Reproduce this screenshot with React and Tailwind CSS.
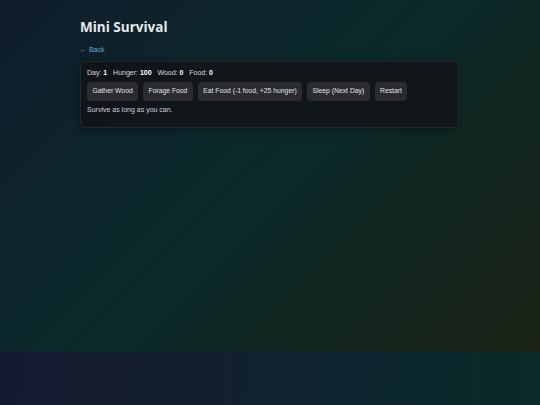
export default function App() {
  const buttons = ["Gather Wood", "Forage Food", "Eat Food (-1 food, +25 hunger)", "Sleep (Next Day)", "Restart"];
  return (
    <div className="min-h-screen w-full flex flex-col font-['Liberation_Sans',Arial,sans-serif]">
      <div className="h-[352px] bg-[linear-gradient(135deg,#101c2b_0%,#0d272c_35%,#0c2a2a_50%,#0f2722_65%,#1c2317_100%)]">
        <div className="w-[379px] ml-[80px] pt-[16px]">
          <h1 className="font-['Open_Sans',sans-serif] font-bold text-[13.5px] leading-[22px] text-[#e6e8ea]">Mini Survival</h1>
          <a className="block mt-[7px] text-[7px] leading-[10px] text-[#6fa7c9]">← Back</a>
          <div className="mt-[6px] rounded-[5px] border border-[#23282c] bg-[#121519]/95 px-[6px] pt-[6px] pb-[12px] shadow-[0_2px_8px_rgba(0,0,0,0.35)]">
            <div className="text-[7px] leading-[10px] text-[#d8dadc]">
              Day: <b className="text-white">1</b>&nbsp;&nbsp; Hunger: <b className="text-white">100</b>&nbsp;&nbsp; Wood: <b className="text-white">0</b>&nbsp;&nbsp; Food: <b className="text-white">0</b>
            </div>
            <div className="mt-[4px] flex gap-[5px]">
              {buttons.map((b) => (
                <button key={b} className="h-[19px] rounded-[4px] bg-[#2a2c2f] px-[5.4px] text-[6.8px] text-[#e0e2e4]">{b}</button>
              ))}
            </div>
            <div className="mt-[4px] text-[7px] leading-[10px] text-[#d0d2d4]">Survive as long as you can.</div>
          </div>
        </div>
      </div>
      <div className="flex-1 bg-[linear-gradient(95deg,#161a30_0%,#121f30_40%,#0e2630_65%,#0b2a28_100%)]"></div>
    </div>
  );
}
